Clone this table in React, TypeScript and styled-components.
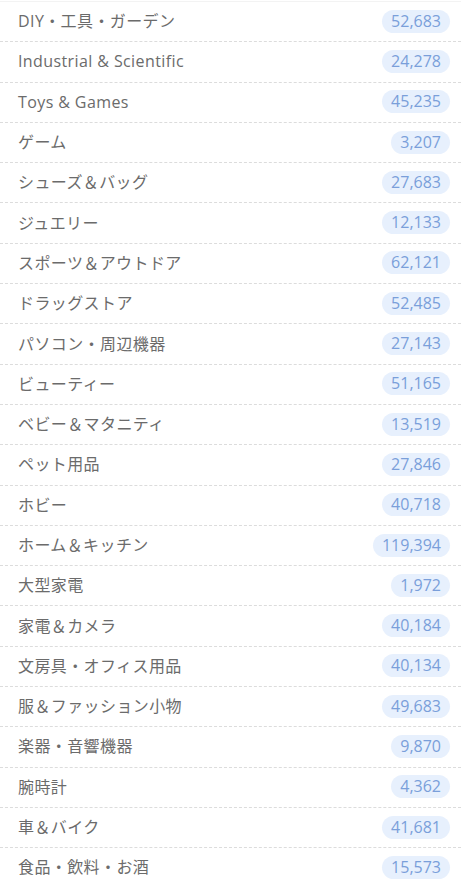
import styled, { createGlobalStyle } from "styled-components";

const categories: [string, number][] = [
  ["DIY・工具・ガーデン", 52683],
  ["Industrial & Scientific", 24278],
  ["Toys & Games", 45235],
  ["ゲーム", 3207],
  ["シューズ＆バッグ", 27683],
  ["ジュエリー", 12133],
  ["スポーツ＆アウトドア", 62121],
  ["ドラッグストア", 52485],
  ["パソコン・周辺機器", 27143],
  ["ビューティー", 51165],
  ["ベビー＆マタニティ", 13519],
  ["ペット用品", 27846],
  ["ホビー", 40718],
  ["ホーム＆キッチン", 119394],
  ["大型家電", 1972],
  ["家電＆カメラ", 40184],
  ["文房具・オフィス用品", 40134],
  ["服＆ファッション小物", 49683],
  ["楽器・音響機器", 9870],
  ["腕時計", 4362],
  ["車＆バイク", 41681],
  ["食品・飲料・お酒", 15573],
];

function App() {
  return (
    <>
      <GlobalStyle />
      <List>
        {categories.map(([name, count], i) => (
          <Row key={name} last={i === categories.length - 1}>
            <Label>{name}</Label>
            <Count>{count.toLocaleString("en-US")}</Count>
          </Row>
        ))}
      </List>
    </>
  );
}

const GlobalStyle = createGlobalStyle`
  body {
    margin: 0;
    background: #fff;
    font-family: "Open Sans", "Noto Sans CJK JP", sans-serif;
  }
`;

const List = styled.ul`
  list-style: none;
  margin: 1px 0 0;
  padding: 0;
  border-top: 1px solid #f3f3f3;
`;

const Row = styled.li<{ last?: boolean }>`
  box-sizing: border-box;
  height: 40.3px;
  display: flex;
  align-items: center;
  justify-content: space-between;
  padding: 0 11px 1px 18px;
  border-bottom: 1px dashed ${(p) => (p.last ? "transparent" : "#dcdcdc")};
`;

const Label = styled.span`
  font-size: 16px;
  line-height: 22px;
  color: #6b6b6b;
  letter-spacing: 0.4px;
`;

const Count = styled.span`
  font-size: 16px;
  line-height: 23px;
  padding: 0 9px;
  border-radius: 12px;
  background: #e7f0fd;
  color: #7a9fda;
`;

export default App;
